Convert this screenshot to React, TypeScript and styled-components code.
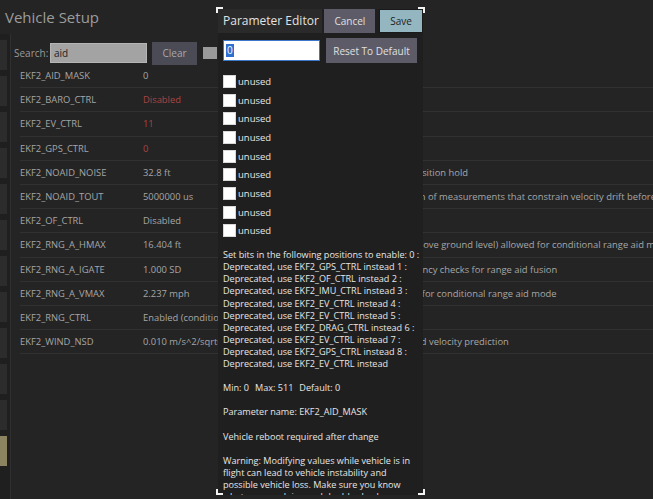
import React from 'react';
import styled, { createGlobalStyle } from 'styled-components';

const GlobalStyle = createGlobalStyle`
  html, body { margin: 0; padding: 0; background: #242424; }
  body { font-family: "Open Sans", "Noto Sans", sans-serif; overflow: hidden; }
  * { box-sizing: border-box; }
`;

const Page = styled.div`
  position: relative;
  width: 653px;
  height: 499px;
  overflow: hidden;
  background: #242424;
  display: flex;
  flex-direction: column;
`;

const Title = styled.div`
  height: 34px;
  line-height: 34px;
  padding-left: 5px;
  font-size: 15px;
  color: #9c9c9c;
`;

const Body = styled.div`
  flex: 1;
  display: flex;
  min-height: 0;
`;

const Sidebar = styled.div`
  width: 11px;
  flex: none;
  border-right: 1px solid #303030;
  background: #1f1f1f;
  padding-top: 6px;
  display: flex;
  flex-direction: column;
  gap: 6px;
`;

const SideButton = styled.div<{ $active?: boolean }>`
  width: 7px;
  height: 30px;
  flex: none;
  background: ${(p) => (p.$active ? '#8c8461' : '#2c2c2c')};
`;

const Main = styled.div`
  flex: 1;
  min-width: 0;
  padding-left: 3px;
  display: flex;
  flex-direction: column;
`;

const SearchRow = styled.div`
  margin-top: 7px;
  height: 24px;
  display: flex;
  align-items: center;
  font-size: 10px;
  color: #9a9a9a;
`;

const SearchLabel = styled.span`
  width: 36px;
`;

const SearchInput = styled.div`
  width: 97px;
  height: 20px;
  background: #a3a3a3;
  border: 1px solid #b5b5b5;
  color: #222;
  font-size: 10px;
  line-height: 18px;
  padding-left: 3px;
`;

const GreyButton = styled.div<{ $w: number; $h: number }>`
  width: ${(p) => p.$w}px;
  height: ${(p) => p.$h}px;
  background: #4b4b56;
  color: #a8a8a8;
  font-size: 10px;
  display: flex;
  align-items: center;
  justify-content: center;
  margin-left: 5px;
`;

const SmallCheck = styled.div`
  width: 14px;
  height: 12px;
  background: #9a9a9a;
  margin-left: 6px;
`;

const Table = styled.div`
  margin-left: 6px;
  margin-top: -1px;
  display: flex;
  flex-direction: column;
`;

const Row = styled.div`
  height: 24.2px;
  display: grid;
  grid-template-columns: 123px 114px 1fr;
  align-items: center;
  border-bottom: 1px solid #313131;
  font-size: 9.4px;
  color: #a6a6a6;
  white-space: nowrap;
  overflow: hidden;
`;

const Cell = styled.span<{ $red?: boolean }>`
  color: ${(p) => (p.$red ? '#a84444' : '#a6a6a6')};
  overflow: hidden;
`;

const Dialog = styled.div`
  position: absolute;
  left: 216px;
  top: 7px;
  width: 209px;
  height: 488px;
  padding: 2px 2px 0;
`;

const Corner = styled.div<{ $pos: 'tl' | 'tr' | 'bl' | 'br' }>`
  position: absolute;
  width: 7px;
  height: 6px;
  border: 0 solid #f2f2f2;
  ${(p) => (p.$pos[0] === 't' ? 'top: 0; border-top-width: 2px;' : 'bottom: 0; border-bottom-width: 2px;')}
  ${(p) => (p.$pos[1] === 'l' ? 'left: 0; border-left-width: 2px;' : 'right: 0; border-right-width: 2px;')}
`;

const Panel = styled.div`
  width: 100%;
  height: 100%;
  background: #1f1f1f;
  overflow: hidden;
  display: flex;
  flex-direction: column;
`;

const Header = styled.div`
  height: 24px;
  display: flex;
  flex: none;
`;

const HeaderTitle = styled.div`
  width: 105px;
  background: #2a2a2a;
  color: #e2e2e2;
  font-size: 12px;
  line-height: 24px;
  padding-left: 5px;
`;

const HeadButton = styled.div<{ $primary?: boolean }>`
  height: 24px;
  width: ${(p) => (p.$primary ? 44 : 51)}px;
  margin-left: ${(p) => (p.$primary ? 4 : 2)}px;
  background: ${(p) => (p.$primary ? '#93b6c1' : '#5c5b67')};
  border: ${(p) => (p.$primary ? '1px solid #1a1a1a' : 'none')};
  color: ${(p) => (p.$primary ? '#1e1e1e' : '#e0e0e0')};
  font-size: 10px;
  display: flex;
  align-items: center;
  justify-content: center;
`;

const EditRow = styled.div`
  display: flex;
  align-items: center;
  margin-top: 5px;
  padding-left: 5px;
  height: 25px;
  flex: none;
`;

const ValueInput = styled.div`
  width: 97px;
  height: 21px;
  background: #fff;
  border: 1px solid #3b78c9;
  padding-left: 2px;
  display: flex;
  align-items: center;
`;

const Selected = styled.span`
  background: #2f6fd0;
  color: #fff;
  font-size: 10px;
  line-height: 13px;
  padding: 0 1px;
`;

const ResetButton = styled.div`
  width: 91px;
  height: 25px;
  margin-left: 6px;
  background: #5c5b67;
  color: #e0e0e0;
  font-size: 10px;
  display: flex;
  align-items: center;
  justify-content: center;
`;

const Bits = styled.div`
  margin-top: 9px;
  padding-left: 5px;
  display: flex;
  flex-direction: column;
  flex: none;
`;

const BitRow = styled.div`
  height: 18.7px;
  display: flex;
  align-items: center;
  font-size: 9.5px;
  color: #e6e6e6;
`;

const Box = styled.span`
  width: 13px;
  height: 13px;
  background: #fff;
  border: 1px solid #d8d8d8;
  margin-right: 2px;
`;

const Info = styled.div`
  margin-top: 9px;
  padding-left: 5px;
  font-size: 9.1px;
  line-height: 12.1px;
  color: #e6e6e6;
  white-space: nowrap;
  flex: none;
`;

const Para = styled.div`
  margin-bottom: 12.1px;
`;

const Limits = styled.div`
  display: flex;
  gap: 6px;
  margin-bottom: 12.1px;
`;

const rows: { name: string; value: string; red?: boolean; desc: string }[] = [
  { name: 'EKF2_AID_MASK', value: '0', desc: 'Integer bitmask' },
  { name: 'EKF2_BARO_CTRL', value: 'Disabled', red: true, desc: 'Barometric sensor aiding' },
  { name: 'EKF2_EV_CTRL', value: '11', red: true, desc: 'External vision aiding' },
  { name: 'EKF2_GPS_CTRL', value: '0', red: true, desc: 'GNSS sensor aiding' },
  { name: 'EKF2_NOAID_NOISE', value: '32.8 ft', desc: 'Measurement noise for non-aiding position hold' },
  {
    name: 'EKF2_NOAID_TOUT',
    value: '5000000 us',
    desc: 'Maximum lapsed time from last fusion of measurements that constrain velocity drift before the EKF will report the horizontal nav solution as invalid',
  },
  { name: 'EKF2_OF_CTRL', value: 'Disabled', desc: 'Optical flow aiding' },
  {
    name: 'EKF2_RNG_A_HMAX',
    value: '16.404 ft',
    desc: 'Maximum absolute altitude (height above ground level) allowed for conditional range aid mode',
  },
  { name: 'EKF2_RNG_A_IGATE', value: '1.000 SD', desc: 'Gate size used for innovation consistency checks for range aid fusion' },
  { name: 'EKF2_RNG_A_VMAX', value: '2.237 mph', desc: 'Maximum horizontal velocity allowed for conditional range aid mode' },
  { name: 'EKF2_RNG_CTRL', value: 'Enabled (conditional mode)', desc: 'Range sensor height aiding' },
  { name: 'EKF2_WIND_NSD', value: '0.010 m/s^2/sqrt(Hz)', desc: 'Process noise spectral density for wind velocity prediction' },
];

const bitsText = [
  'Set bits in the following positions to enable: 0 :',
  'Deprecated, use EKF2_GPS_CTRL instead 1 :',
  'Deprecated, use EKF2_OF_CTRL instead 2 :',
  'Deprecated, use EKF2_IMU_CTRL instead 3 :',
  'Deprecated, use EKF2_EV_CTRL instead 4 :',
  'Deprecated, use EKF2_EV_CTRL instead 5 :',
  'Deprecated, use EKF2_DRAG_CTRL instead 6 :',
  'Deprecated, use EKF2_EV_CTRL instead 7 :',
  'Deprecated, use EKF2_GPS_CTRL instead 8 :',
  'Deprecated, use EKF2_EV_CTRL instead',
];

const warningText = [
  'Warning: Modifying values while vehicle is in',
  'flight can lead to vehicle instability and',
  'possible vehicle loss. Make sure you know',
  'what you are doing and double check your',
  'values before Save!',
];

export default function App() {
  return (
    <>
      <GlobalStyle />
      <Page>
        <Title>Vehicle Setup</Title>
        <Body>
          <Sidebar>
            {Array.from({ length: 12 }).map((_, i) => (
              <SideButton key={i} $active={i === 11} />
            ))}
          </Sidebar>
          <Main>
            <SearchRow>
              <SearchLabel>Search:</SearchLabel>
              <SearchInput>aid</SearchInput>
              <GreyButton $w={45} $h={23}>Clear</GreyButton>
              <SmallCheck />
            </SearchRow>
            <Table>
              {rows.map((r) => (
                <Row key={r.name}>
                  <Cell>{r.name}</Cell>
                  <Cell $red={r.red}>{r.value}</Cell>
                  <Cell>{r.desc}</Cell>
                </Row>
              ))}
            </Table>
          </Main>
        </Body>
        <Dialog>
          <Panel>
            <Header>
              <HeaderTitle>Parameter Editor</HeaderTitle>
              <HeadButton>Cancel</HeadButton>
              <HeadButton $primary>Save</HeadButton>
            </Header>
            <EditRow>
              <ValueInput>
                <Selected>0</Selected>
              </ValueInput>
              <ResetButton>Reset To Default</ResetButton>
            </EditRow>
            <Bits>
              {Array.from({ length: 9 }).map((_, i) => (
                <BitRow key={i}>
                  <Box />
                  unused
                </BitRow>
              ))}
            </Bits>
            <Info>
              <Para>
                {bitsText.map((t) => (
                  <div key={t}>{t}</div>
                ))}
              </Para>
              <Limits>
                <span>Min: 0</span>
                <span>Max: 511</span>
                <span>Default: 0</span>
              </Limits>
              <Para>Parameter name: EKF2_AID_MASK</Para>
              <Para>Vehicle reboot required after change</Para>
              <Para>
                {warningText.map((t) => (
                  <div key={t}>{t}</div>
                ))}
              </Para>
            </Info>
          </Panel>
          <Corner $pos="tl" />
          <Corner $pos="tr" />
          <Corner $pos="bl" />
          <Corner $pos="br" />
        </Dialog>
      </Page>
    </>
  );
}
